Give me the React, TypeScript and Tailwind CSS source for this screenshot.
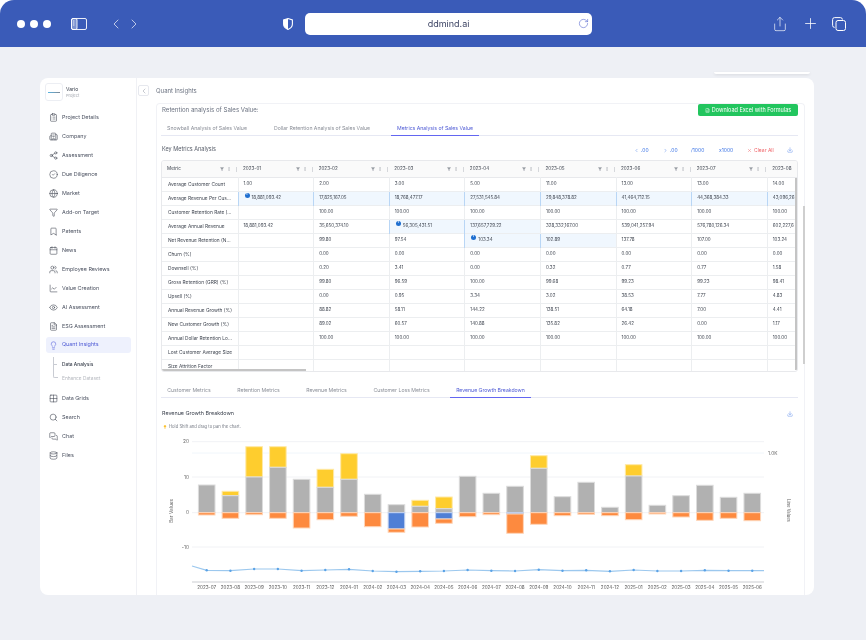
import {
  Bookmark,
  Building2,
  Calendar,
  ChartLine,
  ChevronLeft,
  ChevronRight,
  CircleCheck,
  ClipboardList,
  Database,
  Download,
  EllipsisVertical,
  Eye,
  FileSpreadsheet,
  FileText,
  Funnel,
  Globe,
  Grid2x2,
  Lightbulb,
  MessagesSquare,
  Plus,
  RotateCw,
  Search,
  Share,
  Share2,
  Users,
  X,
} from "lucide-react"

const navItems = [
  { label: "Project Details", icon: ClipboardList },
  { label: "Company", icon: Building2 },
  { label: "Assessment", icon: Share2 },
  { label: "Due Diligence", icon: CircleCheck },
  { label: "Market", icon: Globe },
  { label: "Add-on Target", icon: Funnel },
  { label: "Patents", icon: Bookmark },
  { label: "News", icon: Calendar },
  { label: "Employee Reviews", icon: Users },
  { label: "Value Creation", icon: ChartLine },
  { label: "AI Assessment", icon: Eye },
  { label: "ESG Assessment", icon: FileText },
]

const navAfter = [
  { label: "Data Grids", icon: Grid2x2 },
  { label: "Search", icon: Search },
  { label: "Chat", icon: MessagesSquare },
  { label: "Files", icon: Database },
]

const months = ["2023-01", "2023-02", "2023-03", "2023-04", "2023-05", "2023-06", "2023-07", "2023-08"]

const hundreds = ["", "100.00", "100.00", "100.00", "100.00", "100.00", "100.00", "100.00"]

const rows = [
  { name: "Average Customer Count", cells: ["1.00", "2.00", "3.00", "5.00", "11.00", "13.00", "13.00", "14.00"] },
  {
    name: "Average Revenue Per Cus...",
    cells: ["18,881,093.42", "17,825,167.05", "18,768,477.17", "27,531,545.84", "29,848,378.82", "41,464,712.15", "44,368,384.33", "43,096,26"],
    hi: [0, 1, 2, 3, 4, 5, 6, 7],
    badge: 0,
  },
  { name: "Customer Retention Rate (...", cells: hundreds },
  {
    name: "Average Annual Revenue",
    cells: ["18,881,093.42", "35,650,374.10", "56,305,431.51", "137,657,729.22", "328,332,167.00", "539,041,257.94", "576,780,126.34", "602,227,6"],
    hi: [2, 3],
    badge: 2,
  },
  {
    name: "Net Revenue Retention (N...",
    cells: ["", "99.80", "97.54", "103.34", "102.89", "137.78", "107.00", "103.24"],
    hi: [3, 4],
    badge: 3,
  },
  { name: "Churn (%)", cells: ["", "0.00", "0.00", "0.00", "0.00", "0.00", "0.00", "0.00"] },
  { name: "Downsell (%)", cells: ["", "0.20", "3.41", "0.00", "0.32", "0.77", "0.77", "1.58"] },
  { name: "Gross Retention (GRR) (%)", cells: ["", "99.80", "96.59", "100.00", "99.68", "99.23", "99.23", "98.41"] },
  { name: "Upsell (%)", cells: ["", "0.00", "0.95", "3.34", "3.02", "38.53", "7.77", "4.83"] },
  { name: "Annual Revenue Growth (%)", cells: ["", "88.82", "58.11", "144.22", "138.51", "64.18", "7.00", "4.41"] },
  { name: "New Customer Growth (%)", cells: ["", "89.02", "60.57", "140.88", "135.82", "26.42", "0.00", "1.17"] },
  { name: "Annual Dollar Retention Lo...", cells: hundreds },
  { name: "Lost Customer Average Size", cells: ["", "", "", "", "", "", "", ""] },
  { name: "Size Attrition Factor", cells: ["", "", "", "", "", "", "", ""] },
]

// y values read off the chart: gray top, yellow top, blue bottom, orange bottom (0 = none)
const bars = [
  { m: "2023-07", g: 485, y: 0, b: 0, o: 515 },
  { m: "2023-08", g: 495.7, y: 491.3, b: 0, o: 518.3 },
  { m: "2023-09", g: 477, y: 446.7, b: 0, o: 514.7 },
  { m: "2023-10", g: 467.3, y: 446.7, b: 0, o: 518.3 },
  { m: "2023-11", g: 479.3, y: 0, b: 0, o: 528 },
  { m: "2023-12", g: 487.3, y: 469.3, b: 0, o: 519.7 },
  { m: "2024-01", g: 479.3, y: 453.7, b: 0, o: 516.3 },
  { m: "2024-02", g: 494.3, y: 0, b: 0, o: 526.7 },
  { m: "2024-03", g: 504.7, y: 0, b: 529, o: 532.3 },
  { m: "2024-04", g: 506.3, y: 500.3, b: 0, o: 527 },
  { m: "2024-05", g: 508.7, y: 497, b: 519, o: 523.3 },
  { m: "2024-06", g: 476.3, y: 0, b: 0, o: 516.7 },
  { m: "2024-07", g: 493.3, y: 0, b: 0, o: 514.7 },
  { m: "2024-08", g: 486.3, y: 0, b: 514, o: 533.3 },
  { m: "2024-09", g: 468.3, y: 455.7, b: 0, o: 524.3 },
  { m: "2024-10", g: 496.7, y: 0, b: 0, o: 515.7 },
  { m: "2024-11", g: 482.3, y: 0, b: 0, o: 514.3 },
  { m: "2024-12", g: 507.3, y: 0, b: 0, o: 515.7 },
  { m: "2025-01", g: 476, y: 464.7, b: 0, o: 519.7 },
  { m: "2025-02", g: 505.3, y: 0, b: 0, o: 514 },
  { m: "2025-03", g: 495.7, y: 0, b: 0, o: 517 },
  { m: "2025-04", g: 485.3, y: 0, b: 0, o: 520.3 },
  { m: "2025-05", g: 497.3, y: 0, b: 0, o: 518.3 },
  { m: "2025-06", g: 493.3, y: 0, b: 0, o: 520.7 },
]

const linePts = [570.3, 570.7, 569, 569, 570.7, 570, 569.3, 571, 571.7, 571.3, 571, 570, 570.7, 571, 569.7, 570.7, 570.3, 571.3, 570, 571, 571, 570.3, 570.7, 570.7]

const zero = 512.7
const barX = (i: number) => 206.7 + i * 23.72

function RevenueChart() {
  const line = "192,566 " + linePts.map((y, i) => `${barX(i)},${y}`).join(" ") + " 764,570.7"
  return (
    <svg viewBox="156 434 649 161" width="649" height="161" className="block" fontFamily="Inter, sans-serif">
      {[441.7, 453, 477, 512.7, 547].map((y) => (
        <line key={y} x1="192" x2="764" y1={y} y2={y} stroke={y === 453 ? "#f0f6fb" : "#f1f2f5"} strokeWidth="1" />
      ))}
      <rect x="192" y="581" width="572" height="2" fill="#e5e6e8" />
      {bars.map((b, i) => {
        const x = barX(i) - 8.3
        const w = 16.6
        const blueBottom = b.b || zero
        return (
          <g key={b.m} strokeWidth="1">
            {b.y > 0 && <rect x={x} y={b.y} width={w} height={b.g - b.y} fill="#fecd2e" stroke="#ffe9a6" />}
            <rect x={x} y={b.g} width={w} height={zero - b.g} fill="#b1b1b1" stroke="#dcdcdc" />
            {b.b > 0 && <rect x={x} y={zero} width={w} height={b.b - zero} fill="#4f7fd6" stroke="#c5d4f0" />}
            <rect x={x} y={blueBottom} width={w} height={b.o - blueBottom} fill="#fd8a3f" stroke="#fed5b8" />
            <text x={barX(i)} y="589" textAnchor="middle" fontSize="4.6" fill="#555">
              {b.m}
            </text>
          </g>
        )
      })}
      <polyline points={line} fill="none" stroke="#9cc8ee" strokeWidth="1.2" />
      {linePts.map((y, i) => (
        <circle key={i} cx={barX(i)} cy={y} r="1.2" fill="#5aa2e6" />
      ))}
      {[
        ["20", 443.3],
        ["10", 478.7],
        ["0", 514.3],
        ["-10", 549],
      ].map(([t, y]) => (
        <text key={t} x="189" y={y} textAnchor="end" fontSize="4.8" fill="#666">
          {t}
        </text>
      ))}
      <text x="768" y="455" fontSize="4.8" fill="#666">
        1.0K
      </text>
      <text transform="translate(172.5 511) rotate(-90)" textAnchor="middle" fontSize="4.8" fill="#666">
        Bar Values
      </text>
      <text transform="translate(787 510.5) rotate(90)" textAnchor="middle" fontSize="4.2" fill="#666">
        Line Values
      </text>
    </svg>
  )
}

function Tabs({ items, active, widths }: { items: string[]; active: number; widths: string[] }) {
  return (
    <div className="flex h-[19px] border-b border-[#e6e8f3] text-[5.15px]">
      {items.map((t, i) => (
        <div
          key={t}
          className={`flex h-[19px] shrink-0 items-end justify-center border-b pb-[4px] ${widths[i]} ${
            i === active ? "border-[#6366f1] text-[#4f5bd5]" : "border-transparent text-[#8b8f98]"
          }`}
        >
          {t}
        </div>
      ))}
    </div>
  )
}

export default function App() {
  return (
    <div className="h-[640px] w-[866px] overflow-hidden bg-white text-[5px] leading-none text-[#444a55] blur-[0.3px] [font-family:Inter,sans-serif]">
      {/* browser chrome */}
      <header className="flex h-[47px] items-center rounded-t-[14px] bg-[#3a5bb8] pl-[17px] text-white">
        <div className="flex gap-[5px]">
          <span className="size-[8px] rounded-full bg-white" />
          <span className="size-[8px] rounded-full bg-white" />
          <span className="size-[8px] rounded-full bg-white" />
        </div>
        <svg viewBox="0 0 16 12" className="ml-[20px] h-[12px] w-[16px]" fill="none" stroke="currentColor" strokeWidth="0.9">
          <rect x="0.5" y="0.5" width="15" height="11" rx="1.5" />
          <rect x="0.5" y="0.5" width="5.5" height="11" rx="1.5" fill="white" fillOpacity="0.35" />
          <path d="M2 3h1.4M2 5h1.4M2 7h1.4" strokeWidth="0.8" />
        </svg>
        <ChevronLeft className="ml-[21px] size-[16px]" strokeWidth={1} />
        <ChevronRight className="ml-[2px] size-[16px]" strokeWidth={1} />
        <svg viewBox="0 0 10 12" className="ml-[141px] h-[12px] w-[10px]">
          <path d="M5 .6 9.4 2v4c0 2.6-1.8 4.4-4.4 5.4C2.4 10.4.6 8.6.6 6V2Z" fill="none" stroke="white" strokeWidth="1.1" />
          <path d="M5 .6V11.4C2.4 10.4.6 8.6.6 6V2Z" fill="white" />
        </svg>
        <div className="relative ml-[12px] flex h-[22px] w-[287px] items-center justify-center rounded-[5px] bg-white text-[9px] text-[#3d4464]">
          ddmind.ai
          <RotateCw className="absolute right-[3px] size-[11px] text-[#5a6ad0]" strokeWidth={1.3} />
        </div>
        <Share className="ml-[180px] size-[16px]" strokeWidth={1} />
        <Plus className="ml-[14px] size-[17px]" strokeWidth={1.1} />
        <svg viewBox="0 0 14 14" className="ml-[13px] size-[14px]" fill="none" stroke="currentColor" strokeWidth="1">
          <rect x="4" y="3.5" width="9.5" height="10" rx="2" />
          <path d="M2.6 10.4A2 2 0 0 1 .6 8.4V2.6a2 2 0 0 1 2-2h5.8a2 2 0 0 1 2 2" />
        </svg>
      </header>

      <div className="h-[593px] bg-[#eef0f5] pt-[25px]">
        <div className="ml-[714px] h-[2px] w-[96px] rounded-b-sm bg-white shadow-sm" />

        {/* app window */}
        <div className="ml-[40px] mt-[4px] flex h-[517px] w-[774px] overflow-hidden rounded-[8px] bg-white">
          <aside className="flex w-[97px] shrink-0 flex-col border-r border-[#f0f1f5] pl-[6px] pr-[5px]">
            <div className="-ml-[1px] flex items-center gap-[3px] pt-[5px]">
              <div className="flex size-[18px] items-center justify-center rounded-[3px] border border-[#eceef3]">
                <span className="h-[1px] w-[12px] bg-gradient-to-r from-[#56b4e0] to-[#7c8896]" />
              </div>
              <div className="flex flex-col gap-[2px]">
                <span className="text-[#333a47]">Vario</span>
                <span className="text-[4px] text-[#a2a6ae]">Project</span>
              </div>
            </div>
            <nav className="mt-[7px] flex flex-col">
              {navItems.map(({ label, icon: Icon }) => (
                <div key={label} className="flex h-[19px] items-center gap-[4px] pl-[3px] text-[5.4px] text-[#4b5160]">
                  <Icon className="size-[9px] shrink-0 text-[#3e4450]" strokeWidth={1.5} />
                  {label}
                </div>
              ))}
              <div className="my-[1px] flex h-[16px] items-center gap-[4px] rounded-[3px] bg-[#eef1fd] pl-[3px] text-[5.4px] text-[#4f5bd5]">
                <Lightbulb className="size-[9px] shrink-0 text-[#5561dd]" strokeWidth={1.5} />
                Quant Insights
              </div>
              <div className="relative flex h-[35px] flex-col gap-[10px] pl-[16px] pt-[7.5px] text-[4.8px]">
                <span className="absolute left-[7px] top-[3px] h-[21px] w-[5px] rounded-bl-[2px] border-b border-l border-[#c9ccd3]" />
                <span className="absolute left-[7px] top-[10px] h-px w-[4px] bg-[#c9ccd3]" />
                <span className="font-medium text-[#333a47]">Data Analysis</span>
                <span className="text-[#b4b7be]">Enhance Dataset</span>
              </div>
              {navAfter.map(({ label, icon: Icon }) => (
                <div key={label} className="flex h-[19px] items-center gap-[4px] pl-[3px] text-[5.4px] text-[#4b5160]">
                  <Icon className="size-[9px] shrink-0 text-[#3e4450]" strokeWidth={1.5} />
                  {label}
                </div>
              ))}
            </nav>
          </aside>

          <main className="relative min-w-0 flex-1">
            <div className="flex h-[25px] items-center">
              <div className="ml-[1px] flex size-[11px] items-center justify-center rounded-[2px] border border-[#e6e8ee] text-[#9096a2]">
                <ChevronLeft className="size-[8px]" strokeWidth={1.5} />
              </div>
              <span className="ml-[7px] text-[6px] text-[#6b7280]">Quant Insights</span>
            </div>

            <section className="relative ml-[19px] mr-[9px] h-[492px] rounded-t-[4px] border-l border-r border-t border-[#f1f2f6] pl-[4px] pr-[6px]">
              <div className="flex h-[13px] items-center justify-between pl-[1px]">
                <span className="text-[6.1px] text-[#6b7280]">Retention analysis of Sales Value:</span>
                <div className="flex h-[12px] w-[100px] items-center justify-center gap-[2px] self-start rounded-[2px] bg-[#22c55e] pt-[1px] text-[5.5px] text-white">
                  <FileSpreadsheet className="size-[5px]" strokeWidth={2} />
                  Download Excel with Formulas
                </div>
              </div>

              <Tabs
                items={["Snowball Analysis of Sales Value", "Dollar Retention Analysis of Sales Value", "Metrics Analysis of Sales Value"]}
                active={2}
                widths={["w-[92px]", "w-[138px]", "w-[88px]"]}
              />

              <div className="flex h-[24px] items-center justify-between pl-[1px] pr-[5px] pt-[4px]">
                <span className="text-[5.5px] text-[#555b67]">Key Metrics Analysis</span>
                <div className="flex items-center text-[#3b74e6]">
                  <span className="flex w-[29px] items-center gap-[2px]">
                    <ChevronLeft className="size-[5px]" strokeWidth={2} /> .00
                  </span>
                  <span className="flex w-[28px] items-center gap-[2px]">
                    <ChevronRight className="size-[5px]" strokeWidth={2} /> .00
                  </span>
                  <span className="w-[28px]">/1000</span>
                  <span className="w-[28px]">x1000</span>
                  <span className="flex w-[40px] items-center gap-[2px] text-[#f0656a]">
                    <X className="size-[5px]" strokeWidth={2} /> Clear All
                  </span>
                  <Download className="size-[6px]" strokeWidth={1.5} />
                </div>
              </div>

              <div className="relative h-[212px] overflow-hidden rounded-[3px] border border-[#e8e9ec]">
                <table className="w-[681px] table-fixed border-collapse text-[4.8px] text-[#3f4550]">
                  <colgroup>
                    <col className="w-[76px]" />
                    <col className="w-[75.6px]" />
                    <col className="w-[75.6px]" />
                    <col className="w-[75.6px]" />
                    <col className="w-[75.6px]" />
                    <col className="w-[75.6px]" />
                    <col className="w-[75.6px]" />
                    <col className="w-[75.6px]" />
                    <col className="w-[75.6px]" />
                  </colgroup>
                  <thead>
                    <tr className="h-[16px] border-b border-[#e8e9ec] bg-[#fafafa] text-left">
                      {["Metric", ...months].map((m) => (
                        <th key={m} className="p-0 pt-[1px] text-[4.6px] font-normal">
                          <div className="flex items-center justify-between pl-[5px] pr-[1px]">
                            {m}
                            <span className="flex items-center text-[#8a8f98]">
                              <Funnel className="size-[4px] fill-current" strokeWidth={1} />
                              <EllipsisVertical className="ml-[3px] size-[4px]" strokeWidth={2} />
                              <span className="ml-[5px] h-[5px] w-px bg-[#d5d7db]" />
                            </span>
                          </div>
                        </th>
                      ))}
                    </tr>
                  </thead>
                  <tbody>
                    {rows.map((row) => (
                      <tr key={row.name} className="h-[14px] border-b border-[#eceef0]">
                        <td className="truncate pl-[6px]">{row.name}</td>
                        {row.cells.map((c, i) => {
                          const on = row.hi?.includes(i)
                          return (
                            <td
                              key={i}
                              className={`relative whitespace-nowrap pl-[5px] text-[4.5px] ${
                                on ? "border-l border-l-[#b9d6f5] bg-[#f0f7fe]" : "border-l border-l-[#eceef0]"
                              }`}
                            >
                              {row.badge === i && (
                                <span className="absolute left-[6px] top-[1px] flex size-[5px] items-center justify-center rounded-full bg-[#1f6fd0] text-[3.5px] font-bold text-white">
                                  i
                                </span>
                              )}
                              <span className={row.badge === i ? "ml-[8px]" : ""}>{c}</span>
                            </td>
                          )
                        })}
                      </tr>
                    ))}
                  </tbody>
                </table>
                <div className="absolute bottom-0 left-0 h-[2px] w-[144px] bg-[#c4c4c4]" />
                <div className="absolute right-0 top-[17px] h-[192px] w-[2px] bg-[#c4c4c4]" />
              </div>

              <div className="mt-[7px]">
                <Tabs
                  items={["Customer Metrics", "Retention Metrics", "Revenue Metrics", "Customer Loss Metrics", "Revenue Growth Breakdown"]}
                  active={4}
                  widths={["w-[56px]", "w-[55px] ml-[14px]", "w-[53px] ml-[14px]", "w-[69px] ml-[14px]", "w-[81px] ml-[14px]"]}
                />
              </div>

              <div className="flex h-[25px] items-center justify-between pl-[1px] pr-[5px] pt-[7px]">
                <span className="text-[5.4px] text-[#3c424e]">Revenue Growth Breakdown</span>
                <Download className="size-[6px] text-[#3b74e6]" strokeWidth={1.5} />
              </div>
              <div className="flex h-[11px] items-center gap-[2px] pb-[3px] pl-[2px] text-[4.2px] text-[#777c86]">
                <Lightbulb className="size-[4px] fill-[#fbbf24] text-[#fbbf24]" />
                Hold Shift and drag to pan the chart.
              </div>
              <div className="-ml-[5px]">
                <RevenueChart />
              </div>
              <div className="absolute -right-[1px] top-[102px] h-[158px] w-[2px] bg-[#cfcfcf]" />
            </section>
          </main>
        </div>
      </div>
    </div>
  )
}
